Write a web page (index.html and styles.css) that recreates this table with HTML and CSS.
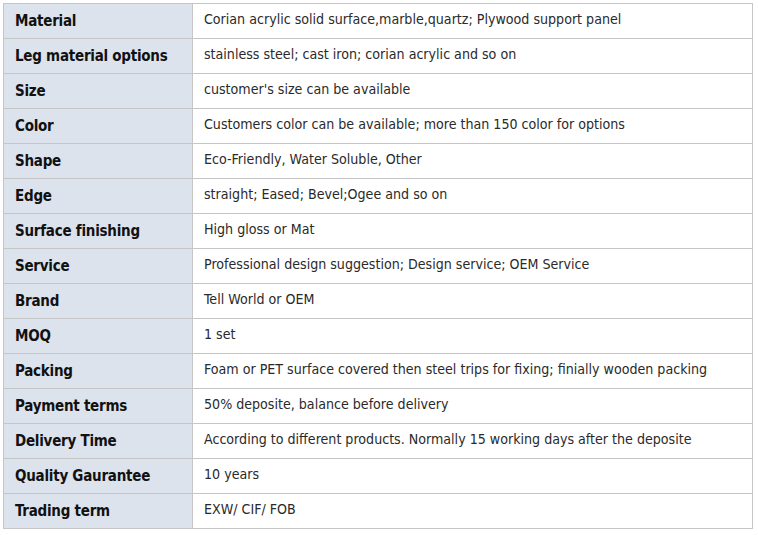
FILE: index.html
```html
<!DOCTYPE html>
<html>
<head>
<meta charset="utf-8">
<link rel="stylesheet" href="styles.css">
</head>
<body>
<table class="spec">
<tr><th>Material</th><td>Corian acrylic solid surface,marble,quartz; Plywood support panel</td></tr>
<tr><th>Leg material options</th><td>stainless steel; cast iron; corian acrylic and so on</td></tr>
<tr><th>Size</th><td>customer's size can be available</td></tr>
<tr><th>Color</th><td>Customers color can be available; more than 150 color for options</td></tr>
<tr><th>Shape</th><td>Eco-Friendly, Water Soluble, Other</td></tr>
<tr><th>Edge</th><td>straight; Eased; Bevel;Ogee and so on</td></tr>
<tr><th>Surface finishing</th><td>High gloss or Mat</td></tr>
<tr><th>Service</th><td>Professional design suggestion; Design service; OEM Service</td></tr>
<tr><th>Brand</th><td>Tell World or OEM</td></tr>
<tr><th>MOQ</th><td>1 set</td></tr>
<tr><th>Packing</th><td>Foam or PET surface covered then steel trips for fixing; finially wooden packing</td></tr>
<tr><th>Payment terms</th><td>50% deposite, balance before delivery</td></tr>
<tr><th>Delivery Time</th><td>According to different products. Normally 15 working days after the deposite</td></tr>
<tr><th>Quality Gaurantee</th><td>10 years</td></tr>
<tr><th>Trading term</th><td>EXW/ CIF/ FOB</td></tr>
</table>
</body>
</html>
```
FILE: styles.css
```css
html, body {
  margin: 0;
  padding: 0;
  background: #ffffff;
}
body {
  padding: 3px 0 0 3px;
}
.spec {
  border-collapse: collapse;
  width: 750px;
  table-layout: fixed;
  font-family: "DejaVu Sans Condensed", "DejaVu Sans", sans-serif;
  color: #222;
}
.spec th, .spec td {
  border: 1px solid #c6c6c6;
  height: 34px;
  padding: 0 0 0 11px;
  box-sizing: border-box;
  text-align: left;
  vertical-align: middle;
}
.spec tr { height: 35px; }
.spec th {
  width: 189px;
  background: #dde3ed;
  font-weight: bold;
  font-size: 15px;
  letter-spacing: -0.25px;
  color: #111;
  padding-bottom: 1px;
}
.spec td {
  background: #fff;
  font-size: 14.1px;
  color: #2a2a2a;
  padding-bottom: 4px;
}
```
